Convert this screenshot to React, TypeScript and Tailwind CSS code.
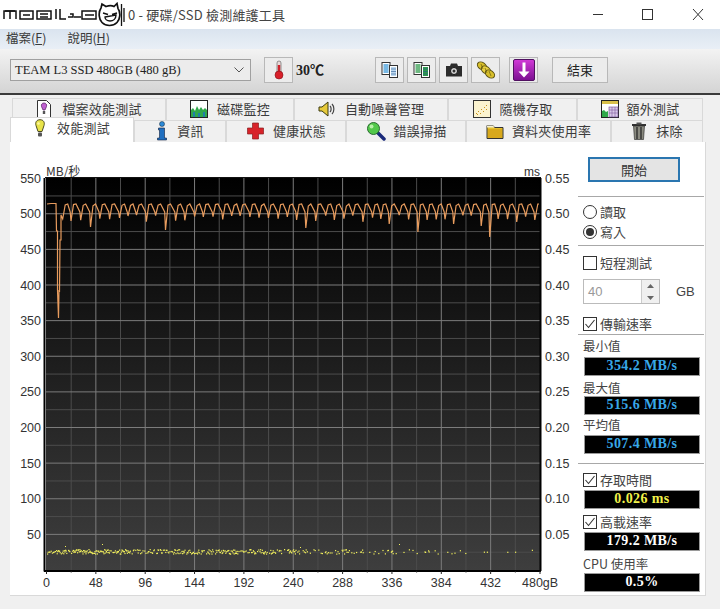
import React from "react";

const CJK = { fontFamily: '"Noto Sans CJK TC","Noto Sans",sans-serif' };

function Bulb() {
  return (
    <svg width="12" height="19" viewBox="0 0 12 19">
      <path d="M6 .7C2.500.7 1 3.500 2 6.500L4 12.500h4l2-6C11 3.500 9.500.7 6 .7z" fill="#e8e34a" stroke="#4a4a20" strokeWidth="1" />
      <rect x="4" y="13.500" width="4" height="4" rx="1" fill="#555" />
      <circle cx="4.500" cy="4.500" r="1.300" fill="#fff8a0" />
    </svg>
  );
}
function FileBang() {
  return (
    <svg width="16" height="20" viewBox="0 0 16 20">
      <path d="M1.500 1.500h9l4 4v13h-13z" fill="#fff" stroke="#333" />
      <path d="M8 4c-2 0-3 1.500-2.500 3.500L7 11h2l1.500-3.500C11 5.500 10 4 8 4z" fill="#c060d0" stroke="#502060" strokeWidth=".7" />
      <rect x="6.800" y="12" width="2.400" height="3" fill="#555" />
    </svg>
  );
}
function ChartIco() {
  return (
    <svg width="18" height="18" viewBox="0 0 18 18">
      <rect x=".5" y=".5" width="17" height="17" fill="#fff" stroke="#222" />
      <path d="M1 17V10l2-2 2 3 2-5 2 4 2-3 2 3 2-2 2 2v7z" fill="#2fa84a" />
      <rect x="3" y="12" width="2" height="5" fill="#1f7fa8" />
      <rect x="8" y="13" width="2" height="4" fill="#1f7fa8" />
      <rect x="13" y="12" width="2" height="5" fill="#1f7fa8" />
    </svg>
  );
}
function Speaker() {
  return (
    <svg width="18" height="18" viewBox="0 0 18 18">
      <path d="M1 7h3l6-5v14l-6-5H1z" fill="#e6c93a" stroke="#3a3a10" />
      <path d="M12 6c1.500 1.500 1.500 4.500 0 6M14 4c2.500 2.500 2.500 7.500 0 10" fill="none" stroke="#444" strokeWidth="1.200" />
    </svg>
  );
}
function Scatter() {
  return (
    <svg width="18" height="18" viewBox="0 0 18 18">
      <rect x=".5" y=".5" width="17" height="17" fill="#fbf3cf" stroke="#333" />
      <g fill="#c8931e">
        <rect x="3" y="13" width="1" height="1" /><rect x="5" y="11" width="1" height="1" /><rect x="7" y="13" width="1" height="1" />
        <rect x="8" y="9" width="1" height="1" /><rect x="10" y="11" width="1" height="1" /><rect x="11" y="7" width="1" height="1" />
        <rect x="13" y="9" width="1" height="1" /><rect x="13" y="5" width="1" height="1" /><rect x="4" y="14" width="1" height="1" />
      </g>
    </svg>
  );
}
function TableIco() {
  return (
    <svg width="18" height="18" viewBox="0 0 18 18">
      <rect x=".5" y=".5" width="17" height="17" fill="#fff" stroke="#222" />
      <rect x="1" y="1" width="16" height="3" fill="#d9c04a" />
      <path d="M1 17v-6l2-1 2 2 2-1v6z" fill="#2fa84a" />
      <rect x="8" y="7" width="9" height="10" fill="#d8c8e8" stroke="#704a90" strokeWidth=".6" />
      <path d="M8 10h9M8 13h9M11 7v10M14 7v10" stroke="#704a90" strokeWidth=".5" />
    </svg>
  );
}
function Info() {
  return (
    <svg width="12" height="20" viewBox="0 0 12 20">
      <circle cx="6" cy="3" r="2.500" fill="#2c8ad8" stroke="#123" strokeWidth=".5" />
      <path d="M2.500 7h6v10h2v2h-9v-2h2v-8h-1z" fill="#1f6fc0" stroke="#102040" strokeWidth=".6" />
    </svg>
  );
}
function Cross() {
  return (
    <svg width="19" height="18" viewBox="0 0 18 18">
      <path d="M6 1h6v5h5v6h-5v5H6v-5H1V6h5z" fill="#d8232a" stroke="#8a2020" strokeWidth=".7" />
    </svg>
  );
}
function Magnifier() {
  return (
    <svg width="20" height="20" viewBox="0 0 20 20">
      <path d="M11 11l7 7" stroke="#1a2a7a" strokeWidth="3.500" strokeLinecap="round" />
      <circle cx="7.500" cy="7.500" r="6" fill="#52c84a" stroke="#2a6a30" />
      <circle cx="5.500" cy="5.500" r="2" fill="#b8f0a8" />
    </svg>
  );
}
function Folder() {
  return (
    <svg width="18" height="18" viewBox="0 0 18 18">
      <path d="M1 3.500h6l1.500 2h8.500v11H1z" fill="#e6c02c" stroke="#333" />
      <rect x="2" y="7" width="14" height="9" fill="#d8a81c" />
      <path d="M1 3.500h6l1.500 2H1z" fill="#f5f0d0" />
    </svg>
  );
}
function Trash() {
  return (
    <svg width="16" height="18" viewBox="0 0 16 18">
      <rect x="1" y="2" width="14" height="2" fill="#333" />
      <rect x="5.500" y="0.500" width="5" height="2" fill="#555" />
      <path d="M2.500 4h11l-1 13.500h-9z" fill="#8a8a80" stroke="#222" strokeWidth=".6" />
      <path d="M6 5v12M10 5v12" stroke="#222" strokeWidth="1.200" />
    </svg>
  );
}
function Thermo() {
  return (
    <svg width="12" height="20" viewBox="0 0 12 20">
      <rect x="4" y="1" width="4" height="13" rx="2" fill="#e8d8d8" stroke="#555" strokeWidth=".6" />
      <rect x="4.800" y="5" width="2.400" height="9" fill="#d0202a" />
      <circle cx="6" cy="15" r="4" fill="#d8202a" stroke="#801018" strokeWidth=".6" />
    </svg>
  );
}
function Docs({ c }: { c: string }) {
  return (
    <svg width="18" height="18" viewBox="0 0 18 18">
      <rect x="1" y="1.500" width="8" height="12" fill="#fff" stroke="#333" />
      <rect x="2.500" y="3" width="5" height="9" fill={c} opacity=".7" />
      <rect x="8.500" y="4.500" width="8" height="12" fill="#fff" stroke="#333" />
      <rect x="10" y="6" width="5" height="9" fill={c === "#3d9ad8" ? "#bcd8ef" : "#2f9a4a"} />
      <path d="M10 8h5M10 10.500h5M10 13h5" stroke="#2a5a90" strokeWidth=".6" />
    </svg>
  );
}
function Camera() {
  return (
    <svg width="18" height="16" viewBox="0 0 18 16">
      <path d="M1 4h4l1-2.500h6l1 2.500h4v10.500H1z" fill="#2c2c2c" />
      <circle cx="9" cy="9" r="3.500" fill="#ddd" stroke="#111" />
      <circle cx="9" cy="9" r="1.500" fill="#333" />
    </svg>
  );
}
function Coins() {
  return (
    <svg width="20" height="18" viewBox="0 0 20 18">
      <ellipse cx="6" cy="5" rx="5" ry="3.500" fill="#d8bf2a" stroke="#5a5010" transform="rotate(35 6 5)" />
      <ellipse cx="10" cy="9" rx="5" ry="3.500" fill="#e8d040" stroke="#5a5010" transform="rotate(35 10 9)" />
      <ellipse cx="14" cy="13" rx="5" ry="3.500" fill="#d8bf2a" stroke="#5a5010" transform="rotate(35 14 13)" />
      <path d="M5 3l2 5M9 7l2 5M13 10l2 5" stroke="#7a6a10" strokeWidth=".8" />
    </svg>
  );
}
function PurpleArrow() {
  return (
    <svg width="22" height="22" viewBox="0 0 22 22">
      <defs>
        <linearGradient id="pg" x1="0" y1="0" x2="0" y2="1">
          <stop offset="0" stopColor="#d23ad8" />
          <stop offset="1" stopColor="#7a0f90" />
        </linearGradient>
      </defs>
      <rect x=".5" y=".5" width="21" height="21" rx="1.500" fill="url(#pg)" stroke="#501060" />
      <path d="M9.500 3.500h3v9h4L11 18.500 5.500 12.500h4z" fill="#fff" />
    </svg>
  );
}

function Logo() {
  return (
    <svg width="126" height="26" viewBox="0 0 126 26" className="shrink-0">
      <g fill="none" stroke="#111" strokeWidth="1.500">
        <path d="M4 17V9h6v8M10 17V9h6v8" />
        <path d="M8 13h0M5 9h10" />
        <rect x="20" y="9" width="13" height="8" />
        <path d="M23 13h7" />
        <rect x="37" y="9" width="14" height="8" />
        <path d="M40 12h8M40 15h8" />
        <path d="M56 7v10M60 7v10h6" />
        <path d="M68 15h5v-3h-3M74 15h7" />
        <rect x="82" y="9" width="14" height="8" />
        <path d="M85 13h9" />
      </g>
      <path d="M101 6l1-4 4 2.500c3-1 6-1 8 0l3-3 1 5c3 4 2 11-1 14-4 4-11 4-15 0-3-3-4-10-1-14.500z" fill="#fff" stroke="#111" strokeWidth="1.700" />
      <path d="M103 11l5 1.500M112 12.500l5-1.500M105 15l11-2c0 4-3 6-6 6s-5-2-5-4z" fill="none" stroke="#111" strokeWidth="1.400" />
      <path d="M121.500 2v22M124 6v14" stroke="#111" strokeWidth="1.300" />
    </svg>
  );
}

function TabItem({ w, icon, label, active, gap }: { w: string; icon: React.ReactNode; label: string; active?: boolean; gap: string }) {
  return (
    <div
      className={`${w} flex items-center justify-center ${gap} border-l border-t border-r border-[#d9d9d9] text-[13px] tracking-[0.2px] text-[#3c3c3c] ${
        active ? "relative bg-white -mt-[3px] h-[25px] pb-[4px]" : "bg-[#f0f0f0] h-[22px] pb-[1px]"
      }`}
    >
      <span className="flex shrink-0 items-center justify-center">{icon}</span>
      <span className="whitespace-nowrap">{label}</span>
    </div>
  );
}

function ToolBtn({ w, children }: { w: string; children: React.ReactNode }) {
  return <div className={`${w} flex h-[26px] shrink-0 items-center justify-center border border-[#b8b8b8] bg-[#ececec]`}>{children}</div>;
}

function Readout({ color, text }: { color: string; text: string }) {
  return (
    <div
      className="ml-[6px] flex h-[19px] w-[116px] items-start justify-center border border-[#9a9a9a] bg-black text-[14px] font-bold leading-[15px] tracking-[0.4px]"
      style={{ color, fontFamily: '"Liberation Serif",serif' }}
    >
      {text}
    </div>
  );
}

function Check({ label, checked, mt }: { label: string; checked?: boolean; mt: string }) {
  return (
    <div className={`${mt} ml-[5px] flex h-[14px] items-center gap-[3px] text-[13px] leading-[14px] text-[#444]`}>
      <span className="flex h-[14px] w-[14px] shrink-0 items-center justify-center border border-[#333] bg-white">
        {checked && (
          <svg width="12" height="12" viewBox="0 0 12 12">
            <path d="M1.500 6l3 3.500L10.500 2" fill="none" stroke="#333" strokeWidth="1.100" />
          </svg>
        )}
      </span>
      <span className="whitespace-nowrap">{label}</span>
    </div>
  );
}

function Radio({ label, on }: { label: string; on?: boolean }) {
  return (
    <div className="ml-[5px] flex h-[20px] items-center gap-[3px] text-[13px] text-[#444]">
      <span className="flex h-[14px] w-[14px] items-center justify-center rounded-full border border-[#333] bg-white">
        {on && <span className="h-[8px] w-[8px] rounded-full bg-[#333]" />}
      </span>
      <span>{label}</span>
    </div>
  );
}

const X0 = 46.5;
const XS = 49.35 / 48;
const gx = (g: number) => X0 + g * XS;
const vy = (v: number) => 570 - v * 0.7125;

function buildOrange() {
  const deep: Record<number, number> = { 91: 227, 162: 230, 306: 228, 415: 232, 477: 226, 487: 237, 385: 224, 450: 224 };
  let seed = 17;
  const r = () => {
    seed = (seed * 16807) % 2147483647;
    return seed / 2147483647;
  };
  const pts: [number, number][] = [
    [47, 204], [51, 203.500], [56, 203.500], [56.500, 231], [57.500, 231], [57.500, 290], [58.500, 318], [59, 290], [59.500, 292], [60, 240], [61, 240], [61, 215], [62.700, 219],
  ];
  let x = 62.700;
  while (x < 530) {
    const step = 8.300 + r() * 1.800;
    const nx = x + step;
    pts.push([x + 2.500, 204.500 + r() * 1.500]);
    pts.push([x + 5, 204]);
    const key = Object.keys(deep).map(Number).find((k) => Math.abs(k - nx) < step / 2);
    const d = key ? deep[key] : 215 + r() * 7;
    pts.push([nx - 0.800, 212]);
    pts.push([nx, d]);
    x = nx;
  }
  pts.push([x + 3, 204], [539, 204]);
  return pts.map((p) => `${p[0].toFixed(1)},${p[1].toFixed(1)}`).join(" ");
}

function buildYellow() {
  let seed = 4242;
  const r = () => {
    seed = (seed * 16807) % 2147483647;
    return seed / 2147483647;
  };
  const out: [number, number, number][] = [];
  for (let x = 47; x < 536; x += 0.600) {
    const density = x < 110 ? 0.85 : x < 300 ? 0.7 : x < 350 ? 0.42 : x < 440 ? 0.24 : x < 480 ? 0.07 : 0.03;
    if (r() > density) continue;
    out.push([x, 549 + r() * 4.500, 1.200]);
  }
  out.push([102, 544, 1], [399, 544, 1], [300, 547, 1], [65, 546, 1]);
  return out;
}

const orange = buildOrange();
const yellow = buildYellow();

function Chart() {
  const minorX = Array.from({ length: 10 }, (_, i) => 24 + i * 48);
  const majorX = Array.from({ length: 9 }, (_, i) => 48 + i * 48);
  const majorY = Array.from({ length: 10 }, (_, i) => 50 + i * 50);
  const minorY = Array.from({ length: 11 }, (_, i) => 25 + i * 50);
  const tf = { fontFamily: '"Liberation Sans",sans-serif', fontSize: 12.500, fill: "#333" };
  return (
    <svg width="568" height="454" viewBox="10 142 568 454" className="shrink-0">
      <defs>
        <linearGradient id="bg" x1="0" y1="0" x2="0" y2="1">
          <stop offset="0" stopColor="#000" />
          <stop offset="1" stopColor="#3e3e3e" />
        </linearGradient>
      </defs>
      <rect x="46" y="178" width="494" height="392" fill="url(#bg)" />
      {minorX.map((g) => (
        <line key={g} x1={gx(g)} x2={gx(g)} y1="178" y2="570" stroke="#4c4c4c" />
      ))}
      {minorY.map((v) => (
        <line key={v} x1="46" x2="540" y1={vy(v)} y2={vy(v)} stroke="#4c4c4c" />
      ))}
      {majorX.map((g) => (
        <line key={g} x1={gx(g)} x2={gx(g)} y1="178" y2="570" stroke="#7c7c7c" />
      ))}
      {majorY.map((v) => (
        <line key={v} x1="46" x2="540" y1={vy(v)} y2={vy(v)} stroke="#7c7c7c" />
      ))}
      <polyline points={orange} fill="none" stroke="#e89c5e" strokeWidth="1.200" />
      {yellow.map((p, i) => (
        <rect key={i} x={p[0]} y={p[1]} width={p[2]} height={p[2]} fill="#f4f25c" />
      ))}
      <path d="M44.500 178v393.500M44 571h497M540.500 178v393" stroke="#000" strokeWidth="2" fill="none" />
      <path d="M45 177.500h496" stroke="#111" />
      {[0, 24, 48, 72, 96, 120, 144, 168, 192, 216, 240, 264, 288, 312, 336, 360, 384, 408, 432, 456, 480].map((g) => (
        <line key={g} x1={gx(g)} x2={gx(g)} y1="571" y2={g % 48 === 0 ? 574 : 572.500} stroke="#222" />
      ))}
      {[...majorY, 550].map((v) => (
        <text key={v} x="41" y={vy(v) + 4.500} textAnchor="end" {...tf}>
          {v}
        </text>
      ))}
      {[0.05, 0.1, 0.15, 0.2, 0.25, 0.3, 0.35, 0.4, 0.45, 0.5, 0.55].map((m, i) => (
        <text key={m} x="545" y={vy(50 * (i + 1)) + 4.500} {...tf}>
          {m.toFixed(2)}
        </text>
      ))}
      {[0, 48, 96, 144, 192, 240, 288, 336, 384, 432].map((g) => (
        <text key={g} x={gx(g)} y="587" textAnchor="middle" {...tf}>
          {g}
        </text>
      ))}
      <text x="522" y="587" {...tf}>
        480gB
      </text>
      <text x="46" y="176" style={{ ...CJK, fontSize: 12, fill: "#333" }}>
        MB/秒
      </text>
      <text x="524" y="176" {...tf} fontSize="12">
        ms
      </text>
    </svg>
  );
}

function Hr({ mt }: { mt: string }) {
  return <div className={`${mt} h-px w-[126px] bg-[#a8a8a8]`} />;
}

export default function App() {
  return (
    <div className="flex h-[609px] w-[720px] flex-col overflow-hidden bg-[#f0f0f0]" style={CJK}>
      <div className="flex h-[29px] shrink-0 items-center bg-white">
        <Logo />
        <span className="ml-[2px] whitespace-nowrap text-[13px] tracking-[0.2px] text-[#444]">0 - 硬碟/SSD 檢測維護工具</span>
        <div className="ml-auto flex items-center">
          <svg width="113" height="14" viewBox="0 0 113 14" className="mr-[15px]">
            <path d="M1 6.500h10" stroke="#333" />
            <rect x="50.500" y="1.500" width="10" height="10" fill="none" stroke="#333" />
            <path d="M101 1l10 11M111 1l-10 11" stroke="#333" />
          </svg>
        </div>
      </div>

      <div className="flex h-[20px] shrink-0 items-center gap-[21px] bg-gradient-to-b from-[#dae4ef] to-[#e9eff6] pb-[1px] pl-[6px] text-[12.500px] text-[#3a3a3a]">
        <span>
          檔案(<span className="underline">F</span>)
        </span>
        <span>
          說明(<span className="underline">H</span>)
        </span>
      </div>

      <div className="flex h-[44px] shrink-0 items-center bg-gradient-to-b from-[#f3f3f3] to-[#d4d4d4] pl-[10px] pb-[2px]">
        <div
          className="flex h-[22px] w-[241px] shrink-0 items-center justify-between border border-[#a0a0a0] bg-[#ececec] pl-[4px] pr-[6px] text-[12.500px] text-[#222]"
          style={{ fontFamily: '"Liberation Serif",serif' }}
        >
          <span>TEAM L3 SSD 480GB (480 gB)</span>
          <svg width="10" height="6" viewBox="0 0 10 6">
            <path d="M.5.5L5 5 9.500.5" fill="none" stroke="#555" />
          </svg>
        </div>
        <div className="ml-[13px]">
          <ToolBtn w="w-[29px]">
            <Thermo />
          </ToolBtn>
        </div>
        <span className="ml-[3px] w-[33px] whitespace-nowrap text-[14px] font-bold text-[#222]" style={{ fontFamily: '"Liberation Serif","Noto Sans CJK TC",serif' }}>
          30℃
        </span>
        <div className="ml-[46px] flex gap-[3px]">
          <ToolBtn w="w-[29px]"><Docs c="#3d9ad8" /></ToolBtn>
          <ToolBtn w="w-[29px]"><Docs c="#2f9a4a" /></ToolBtn>
          <ToolBtn w="w-[29px]"><Camera /></ToolBtn>
          <ToolBtn w="w-[29px]"><Coins /></ToolBtn>
        </div>
        <div className="ml-[9px]">
          <ToolBtn w="w-[29px]"><PurpleArrow /></ToolBtn>
        </div>
        <div className="ml-[14px]">
          <ToolBtn w="w-[56px]">
            <span className="text-[13px] text-[#222]">結束</span>
          </ToolBtn>
        </div>
      </div>
      <div className="h-[2px] shrink-0 bg-[#3a3a3a]" />

      <div className="mt-[3px] flex shrink-0 pl-[12px]">
        <TabItem w="w-[154px]" gap="gap-[10px]" icon={<FileBang />} label="檔案效能測試" />
        <TabItem w="w-[128px]" gap="gap-[9px]" icon={<ChartIco />} label="磁碟監控" />
        <TabItem w="w-[154px]" gap="gap-[9px]" icon={<Speaker />} label="自動噪聲管理" />
        <TabItem w="w-[129px]" gap="gap-[9px]" icon={<Scatter />} label="隨機存取" />
        <TabItem w="w-[126px]" gap="gap-[8px]" icon={<TableIco />} label="額外測試" />
      </div>
      <div className="flex h-[22px] shrink-0 items-start pl-[10px]">
        <TabItem w="w-[124px]" gap="gap-[11px]" active icon={<Bulb />} label="效能測試" />
        <TabItem w="w-[92px]" gap="gap-[9px]" icon={<Info />} label="資訊" />
        <TabItem w="w-[120px]" gap="gap-[8px]" icon={<Cross />} label="健康狀態" />
        <TabItem w="w-[120px]" gap="gap-[8px]" icon={<Magnifier />} label="錯誤掃描" />
        <TabItem w="w-[145px]" gap="gap-[8px]" icon={<Folder />} label="資料夾使用率" />
        <TabItem w="w-[92px]" gap="gap-[9px]" icon={<Trash />} label="抹除" />
      </div>

      <div className="ml-[10px] flex h-[454px] w-[696px] shrink-0 border-b border-r border-[#d9d9d9] bg-white">
        <Chart />
        <div className="flex w-[128px] flex-col">
          <div className="ml-[10px] mt-[15px] flex h-[25px] w-[92px] items-center justify-center border-2 border-[#2a76b0] bg-[#e4e4e4] text-[13px] text-[#333]">開始</div>
          <Hr mt="mt-[14px]" />
          <div className="mt-[5px]">
            <Radio label="讀取" />
            <Radio label="寫入" on />
          </div>
          <Hr mt="mt-[3px]" />
          <Check mt="mt-[10px]" label="短程測試" />
          <div className="mt-[9px] ml-[5px] flex items-center">
            <div className="flex h-[25px] w-[77px] items-center justify-between border border-[#bbb] bg-white pl-[4px] text-[13px] text-[#999]" style={{ fontFamily: '"Liberation Sans",sans-serif' }}>
              <span>40</span>
              <div className="flex h-full w-[18px] flex-col justify-between border-l border-[#ccc] bg-[#f0f0f0]">
                <span className="flex h-[11px] items-center justify-center">
                  <svg width="7" height="4" viewBox="0 0 7 4"><path d="M3.500 0L7 4H0z" fill="#666" /></svg>
                </span>
                <span className="flex h-[11px] items-center justify-center">
                  <svg width="7" height="4" viewBox="0 0 7 4"><path d="M0 0h7L3.500 4z" fill="#666" /></svg>
                </span>
              </div>
            </div>
            <span className="ml-[16px] text-[13px] text-[#444]" style={{ fontFamily: '"Liberation Sans",sans-serif' }}>GB</span>
          </div>
          <Check mt="mt-[13px]" label="傳輸速率" checked />
          <Hr mt="mt-[3px]" />
          <div className="ml-[5px] mt-[3px] h-[16px] text-[12.500px] leading-[16px] text-[#444]">最小值</div>
          <div className="mt-[3px]"><Readout color="#38a8e8" text="354.2 MB/s" /></div>
          <div className="ml-[5px] mt-[3px] h-[17px] text-[12.500px] leading-[17px] text-[#444]">最大值</div>
          <Readout color="#38a8e8" text="515.6 MB/s" />
          <div className="ml-[5px] mt-[3px] h-[17px] text-[12.500px] leading-[14px] text-[#444]">平均值</div>
          <Readout color="#38a8e8" text="507.4 MB/s" />
          <Hr mt="mt-[9px]" />
          <Check mt="mt-[9px]" label="存取時間" checked />
          <div className="mt-[3px]"><Readout color="#f2f24a" text="0.026 ms" /></div>
          <Check mt="mt-[6px]" label="高載速率" checked />
          <div className="mt-[3px]"><Readout color="#ffffff" text="179.2 MB/s" /></div>
          <div className="ml-[5px] mt-[3px] h-[19px] text-[12.500px] leading-[19px] text-[#444]">CPU 使用率</div>
          <Readout color="#ffffff" text="0.5%" />
        </div>
      </div>
    </div>
  );
}
